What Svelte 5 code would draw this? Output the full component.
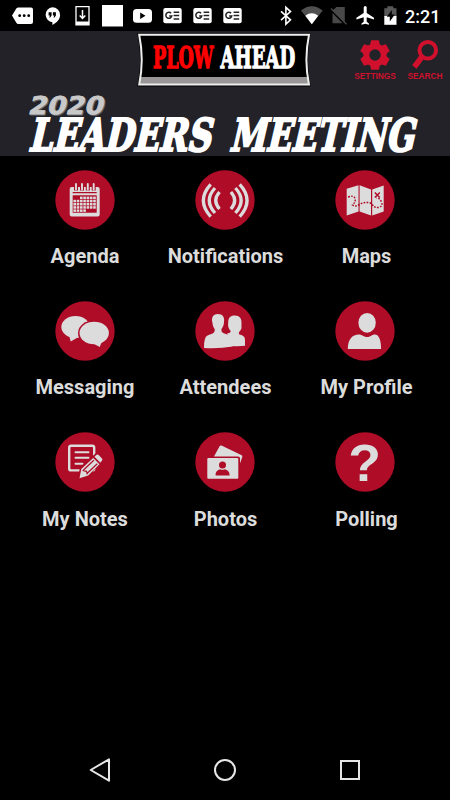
<script lang="ts">
  type Tile = { id: string; label: string };

  const tiles: Tile[] = [
    { id: 'agenda', label: 'Agenda' },
    { id: 'notifications', label: 'Notifications' },
    { id: 'maps', label: 'Maps' },
    { id: 'messaging', label: 'Messaging' },
    { id: 'attendees', label: 'Attendees' },
    { id: 'profile', label: 'My Profile' },
    { id: 'notes', label: 'My Notes' },
    { id: 'photos', label: 'Photos' },
    { id: 'polling', label: 'Polling' },
  ];

  // day cells in the calendar glyph, one entry per week row
  const weeks = [
    { y: 26.6, from: 2, to: 7 },
    { y: 29.8, from: 0, to: 7 },
    { y: 33, from: 0, to: 7 },
    { y: 36.2, from: 0, to: 7 },
    { y: 39.4, from: 0, to: 4 },
  ];
  const days = weeks.flatMap((w) =>
    Array.from({ length: w.to - w.from }, (_, i) => ({ x: 18.4 + (w.from + i) * 3.3, y: w.y }))
  );
</script>

<div class="screen">
  <!-- Android status bar -->
  <div class="status">
    <svg width="250" height="31" viewBox="0 0 250 31" fill="#fff">
      <path d="M12 15.5 16.3 8.6Q17 7.5 18.5 7.5H31Q33 7.5 33 9.5V22Q33 24 31 24H18.5Q17 24 16.3 22.8Z" />
      <g fill="#000"><circle cx="19.7" cy="15.7" r="1.4" /><circle cx="24.2" cy="15.7" r="1.4" /><circle cx="28.7" cy="15.7" r="1.4" /></g>
      <path d="M52.3 7.2a7.8 7.8 0 0 1 7.8 7.8c0 4.3-3.4 7.7-7.7 10v-2.7a7.6 7.6 0 0 1-.1-15.1Z" />
      <path fill="#000" d="M48.6 12.3h3v3.2l-1.4 2h-1l.8-2h-1.4zM52.9 12.3h3v3.2l-1.4 2h-1l.8-2h-1.4z" />
      <path fill="none" stroke="#fff" stroke-width="1.3" d="M76 6.7h13v18.2H76z" />
      <path d="M76 21.5h13v3.4H76z" />
      <path fill="none" stroke="#fff" stroke-width="1.5" d="M82.5 10v8.3M79.7 15.6l2.8 2.9 2.8-2.9" />
      <path d="M102 5h21v21.5h-21z" />
      <rect x="133" y="9" width="19" height="13.7" rx="3.5" />
      <path fill="#000" d="m140.2 12.5 5.3 3.2-5.3 3.2z" />
      {#each [163.3, 193.3, 223.3] as x}
        <rect {x} y="8" width="18.4" height="15.2" rx="2" />
        <path
          transform="translate({x} 0)"
          fill="none"
          stroke="#222"
          stroke-width="1.5"
          d="M7.8 13.3a3 3 0 1 0 .7 2.6H5.9M10.3 12.3h5.6M10.3 15.6h5.6M10.3 18.9h5.6"
        />
      {/each}
    </svg>
    <svg width="150" height="31" viewBox="250 0 150 31" fill="#fff">
      <path fill="none" stroke="#fff" stroke-width="1.6" d="m281 11.3 9.5 8.5-4.6 4.4V7.4l4.6 4.2-9.5 8.5" />
      <path fill="#505050" d="M301 10.5Q311.7 2 322.7 10.5L311.8 24.2Z" />
      <path d="M305.3 15.7Q311.7 11 318.2 15.7L311.8 24.2Z" />
      <path fill="#484848" d="M336.5 7h8.3v16l-12.4-12.5zM332.5 13l10 10.2h-10z" />
      <path fill="none" stroke="#484848" stroke-width="1.3" d="m331 8.5 15.5 15.7" />
      <path d="M363.7 7.5a1.5 1.5 0 0 1 3 0V13l7.3 4.7v1.9l-7.3-2.3v4.5l2.2 1.6v1.4l-3.7-1-3.7 1v-1.4l2.2-1.6v-4.5l-7.3 2.3v-1.9l7.3-4.7z" />
      <path fill="#585858" d="M384.3 8.2h3V6.3h6v1.9h3.2v8.5h-12.2z" />
      <path d="M384.3 16h12.2v8.8h-12.2z" />
      <path fill="#000" d="m391.8 10-5 6.8h3v4.7l5-7h-3z" />
    </svg>
    <span class="clock">2:21</span>
  </div>

  <header>
    <div class="top">
      <svg class="logo" width="174" height="56" viewBox="137 32 174 56">
        <path d="M137.3 33H310.7Q305 60 310.7 86.5H137.3Q143 60 137.3 33Z" fill="#000" />
        <path d="M140 77H308.5L309.2 84.4H139Z" fill="#999698" />
        <path d="M139.2 34.8H309Q303.8 60 309 84.6H139.2Q144.3 60 139.2 34.8Z" fill="none" stroke="#eee" stroke-width="2" />
        <g class="slab plate">
          <text transform="translate(153 68) scale(.585 1)" fill="#fe0000" stroke="#fe0000">PLOW</text>
          <text transform="translate(220.5 68) scale(.604 1)" fill="#fff" stroke="#fff">AHEAD</text>
        </g>
      </svg>
      <button class="action settings" aria-label="Settings">
        <svg width="32" height="32" viewBox="0 0 32 32">
          <g fill="#d0102d">
            {#each [0, 60, 120] as a}
              <path transform="rotate({a} 16 16)" d="M12.2 1.2h7.6l1.4 6v17.6l-1.4 6h-7.6l-1.4-6V7.2z" />
            {/each}
            <circle cx="16" cy="16" r="11.6" />
          </g>
          <circle cx="16" cy="16" r="5.7" fill="#232228" />
        </svg>
        <span>SETTINGS</span>
      </button>
      <button class="action search" aria-label="Search">
        <svg width="32" height="32" viewBox="0 0 32 32" fill="none" stroke="#d0102d">
          <circle cx="18.8" cy="11.2" r="8.3" stroke-width="4" />
          <path d="M13.2 17.5 5.4 28" stroke-width="5.6" />
        </svg>
        <span>SEARCH</span>
      </button>
    </div>
    <svg class="title" width="450" height="66" viewBox="0 90 450 66">
      <g class="year">
        <text transform="translate(28.5 115.3) skewX(-14) scale(1.1 1)" fill="#66676b" stroke="#66676b">2020</text>
        <text transform="translate(27.5 113.8) skewX(-14) scale(1.1 1)" fill="#c9c8c9" stroke="#c9c8c9">2020</text>
      </g>
      <g class="slab heading" fill="#fff" stroke="#fff">
        <text transform="translate(28 150.5) skewX(-13) scale(.747 1)">LEADERS</text>
        <text transform="translate(229 150.5) skewX(-13) scale(.73 1)">MEETING</text>
      </g>
    </svg>
  </header>

  <main>
    {#each tiles as tile}
      <button class="tile">
        <svg width="60" height="60" viewBox="0 0 60 60" fill="#dcdcdd">
          <circle cx="30" cy="30" r="29.7" fill="#ae0c27" />
          {#if tile.id === 'agenda'}
            <rect x="14.7" y="17" width="30" height="29.5" rx="2" />
            <path stroke="#ae0c27" stroke-width="4" d="M21 16v4.5M27 16v4.5M32.8 16v4.5M38.7 16v4.5" />
            <path stroke="#dcdcdd" stroke-width="1.9" stroke-linecap="round" d="M21 14v5.5M27 14v5.5M32.8 14v5.5M38.7 14v5.5" />
            <path fill="#ae0c27" d="M17.7 22h24v1.3h-24zM17.7 25.3h24v17.4h-24z" />
            {#each days as d}<rect x={d.x} y={d.y} width="2.6" height="2.5" />{/each}
          {:else if tile.id === 'notifications'}
            <g fill="none" stroke="#dcdcdd" stroke-width="3.3">
              {#each ['translate(0 0)', 'matrix(-1 0 0 1 60.4 0)'] as side}
                <path transform={side} d="M15.7 14.4Q1 30.5 15.7 46.6M20 18Q8.5 30.5 20 43M24.5 22Q17 30.5 24.5 39" />
              {/each}
            </g>
          {:else if tile.id === 'maps'}
            <path d="m11.7 18.8 11.8-3.5v26.3l-11.8 4zM24.6 15.3 36 19.4v26.2l-11.4-4zM37.2 19.4l11.5-3.8v25.8l-11.5 4.2z" />
            <path
              fill="none"
              stroke="#ae0c27"
              stroke-width="1.5"
              stroke-dasharray="1.7 1.3"
              d="M13 27q6-2 7 1.5t-2.5 6.5q3 2 7-.5t9-2q3 .5 4.5 3t6 2q4-1.5 2.5-5.5t-5-4"
            />
            <path stroke="#ae0c27" stroke-width="1.5" d="m39.8 22.5 5 5M44.8 22.5l-5 5" />
          {:else if tile.id === 'messaging'}
            <ellipse cx="20.5" cy="26" rx="14.2" ry="11" />
            <path d="m14 34 1.7 6.5 7-4z" />
            <ellipse cx="39.2" cy="32" rx="16.2" ry="12.8" fill="#ae0c27" />
            <ellipse cx="39.2" cy="32" rx="14.7" ry="11.3" />
            <path d="m47 40.5-2.3 5.5-6-3.3z" />
          {:else if tile.id === 'attendees'}
            <path d="M39.8 14.5c5 0 7 3 6.7 8-.2 3.5.5 5-.8 6.5-1.5 2-2.3 2.5-1.7 4.2 4.5 1.5 6 2.3 6 6v5.5q-6 .8-13 .3L32 32.5q3.5-.3 3.7-2.5c-2.2-2-3-5-2.5-8.5 0-4.5 2-7 6.6-7Z" />
            <path d="M22.8 13c5 0 7 3.3 6.2 8-.1 3-.9 5-2.3 6.5-.8 2.5 0 4 2 4.8 6.3 2 8.8 3.5 9 8.2v5q-14 2.500-28.7 1.5-.2-11 3.5-12.5c5-2 7.5-1.8 7.2-6.5-1.3-1.5-2-3.5-2.2-6.2-1.5-4.500.3-8.8 5.3-8.8Z" />
          {:else if tile.id === 'profile'}
            <ellipse cx="32.1" cy="21.8" rx="8.7" ry="9.9" />
            <path d="M12.8 48c0-9.5 4.5-14.5 11-14.5 3.5 0 4.5 2.5 8.3 2.5s4.5-2.5 7.7-2.5c3.7 0 6.3 4.5 6.3 14.5Z" />
          {:else if tile.id === 'notes'}
            <rect x="14.2" y="13.8" width="25" height="24.6" rx="2" fill="none" stroke="#dcdcdd" stroke-width="2.4" />
            <path stroke="#dcdcdd" stroke-width="2" stroke-linecap="round" d="M20.5 20.2h13M20.5 25.8h13M20.5 31.8h7" />
            <path fill="#ae0c27" d="M22.5 48 25 35.5 41.5 20.5l7 7L33 45z" />
            <path d="m24.5 46.3 1.8-9.3L38.2 26l6.3 6.3-11.300 11.2zM39.5 24.7l2-1.9q1.2-.8 2.2.3l3.3 3.3q1 1.2 0 2.2l-1.6 2.2z" />
            <path fill="none" stroke="#ae0c27" stroke-width="1.2" d="m28.5 38 10.3-9.7M32 41.5l10.3-9.7M27.5 38.5l4 .8.8 3" />
          {:else if tile.id === 'photos'}
            <path d="m19 24.5 5.6-10.3q.6-1.2 1.9-.6l20.2 9.6q1 .6.6 1.8L45 31.5v-5q0-2-2-2z" />
            <rect x="12.3" y="26" width="31" height="20.7" rx="1" />
            <circle cx="27.5" cy="33" r="3.5" fill="#ae0c27" />
            <path fill="#ae0c27" d="M20.6 43.6c0-4.2 1.3-5 4.5-6.4q2.4 1.3 4.8 0c3.3 1.4 4.7 2.2 4.7 6.4Z" />
          {:else}
            <text class="mark" transform="translate(29.5 48.7) scale(1.07 1.02)">?</text>
          {/if}
        </svg>
        <span>{tile.label}</span>
      </button>
    {/each}
  </main>

  <nav>
    <svg width="450" height="60" viewBox="0 740 450 60" fill="none" stroke="#e6e6e6" stroke-width="2">
      <path stroke-linejoin="round" d="M109 759.3v21.4L90.7 770z" />
      <circle cx="225" cy="770" r="10" />
      <rect x="341" y="761" width="18" height="18" />
    </svg>
  </nav>
</div>

<style>
  :global(body) {
    margin: 0;
    background: #000;
  }
  .screen {
    width: 450px;
    height: 800px;
    display: flex;
    flex-direction: column;
    background: #000;
    font-family: Roboto, sans-serif;
    overflow: hidden;
  }
  svg {
    display: block;
    flex-shrink: 0;
  }
  button {
    border: 0;
    padding: 0;
    margin: 0;
    background: none;
    font: inherit;
  }

  /* status bar */
  .status {
    height: 31px;
    flex-shrink: 0;
    display: flex;
  }
  .clock {
    padding-left: 5px;
    font-size: 18px;
    line-height: 33px;
    font-weight: 500;
    color: #fff;
    white-space: nowrap;
  }

  /* banner */
  header {
    height: 125px;
    flex-shrink: 0;
    background: #232228;
  }
  .top {
    height: 59px;
    display: flex;
    padding-left: 137px;
  }
  .logo {
    margin-top: 1px;
  }
  .title {
    overflow: visible;
  }
  .action {
    display: flex;
    flex-direction: column;
    align-items: center;
    padding-top: 8px;
    width: 50px;
    height: 59px;
    color: #d0102d;
    font-family: 'Liberation Sans', Arial, sans-serif;
    font-size: 8.3px;
    line-height: 10px;
    font-weight: 700;
  }
  .settings {
    margin-left: 39px;
  }
  .slab {
    font-family: 'DejaVu Serif', serif;
    font-weight: 700;
  }
  .slab text {
    vector-effect: non-scaling-stroke;
  }
  .plate {
    font-size: 30px;
    stroke-width: 1.1px;
  }
  .heading {
    font-size: 45px;
    stroke-width: 2px;
  }
  .year {
    font-family: 'DejaVu Sans', sans-serif;
    font-weight: 700;
    font-size: 24.5px;
    stroke-width: 0.8px;
  }

  /* tiles */
  main {
    flex: 1;
    display: grid;
    grid-template-columns: repeat(3, 140px);
    grid-auto-rows: 131.25px;
    align-content: start;
    padding: 13.5px 0 0 15px;
  }
  .tile {
    display: flex;
    flex-direction: column;
    align-items: center;
    color: #dcdcdc;
    font-size: 20px;
    line-height: 24px;
    font-weight: 700;
    white-space: nowrap;
  }
  .tile span {
    margin-top: 14.5px;
  }
  .tile:nth-child(3n + 2) span {
    margin-left: 1px;
  }
  .tile:nth-child(3n) span {
    margin-left: 3px;
  }
  .mark {
    font-family: 'Liberation Sans', Arial, sans-serif;
    font-weight: 700;
    font-size: 50px;
    text-anchor: middle;
  }

  nav {
    height: 60px;
    flex-shrink: 0;
  }
</style>
